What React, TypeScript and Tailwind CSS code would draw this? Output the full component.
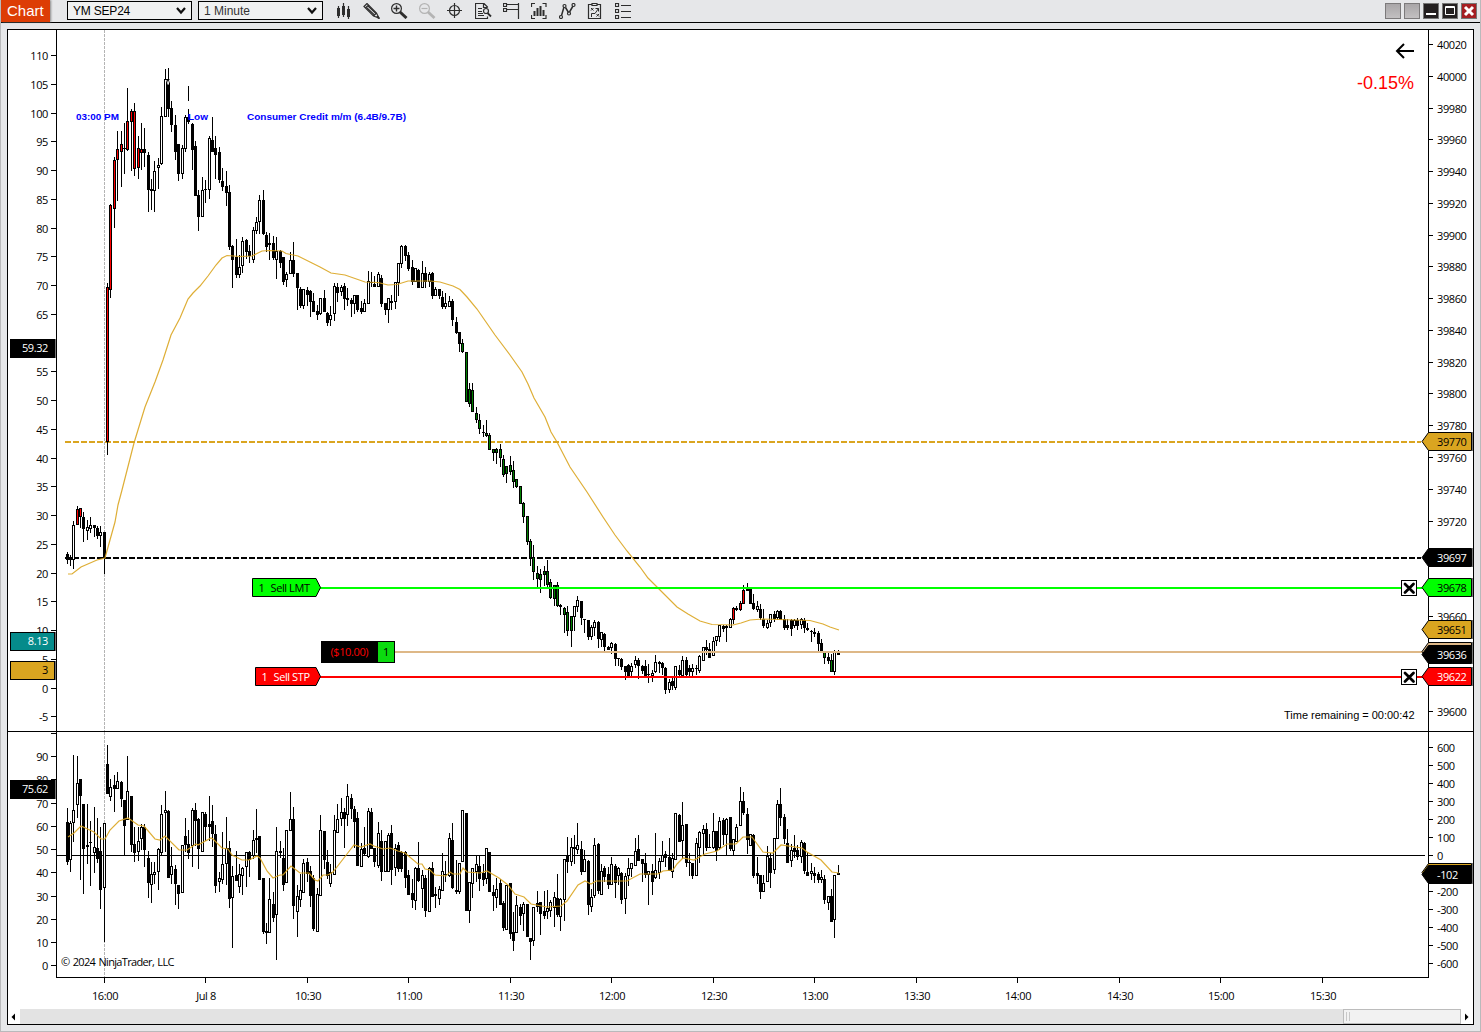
import React from 'react';

const INK = '#000000';
const GOLD = '#daa520';

// each bar: high bodyTop bodyBottom low kind (b = down, h = up, r / g = highlighted)
const PRICE_BARS = `
552 554 559 564 b;555 557 559 566 b;521 525 559 569 h;506 509 524 525 r;508 508 516 528 r;512 517 528 542 b;
520 527 530 540 h;517 525 528 533 h;525 525 527 537 b;526 528 535 539 b;526 532 535 547 h;532 532 557 574 b;
283 287 441 455 r;204 205 289 298 r;157 160 208 228 r;131 149 159 201 r;131 144 151 187 r;123 148 148 174 b;
88 121 149 151 r;109 111 121 171 r;103 111 168 176 r;136 148 167 179 r;123 149 152 170 r;128 149 152 167 b;
152 155 189 212 b;179 189 190 210 b;161 171 190 212 h;158 165 167 189 h;107 116 163 165 h;69 79 116 116 h;
68 79 108 117 b;101 108 124 132 b;115 125 151 160 b;144 144 173 181 b;145 148 173 179 h;115 117 148 152 h;
86 117 121 124 b;123 124 149 170 b;141 146 195 195 b;190 195 216 231 b;177 190 216 216 h;180 189 189 203 b;
136 138 189 199 h;117 140 151 151 b;136 148 154 179 b;147 152 179 183 b;168 181 186 191 b;171 186 192 206 b;
185 192 246 250 b;245 246 259 288 b;239 257 274 278 b;255 267 274 278 h;237 241 265 273 h;239 240 251 259 b;
245 251 255 263 b;227 230 259 263 h;217 222 230 234 h;195 200 221 234 h;190 200 233 235 b;232 235 246 252 b;
233 243 244 260 b;236 243 257 260 b;237 251 259 279 h;250 251 262 268 b;257 257 281 285 b;272 274 279 287 h;
252 260 273 274 h;242 260 273 277 b;273 273 287 310 b;287 289 305 308 b;289 289 305 309 h;287 290 294 306 b;
290 291 301 317 b;293 301 311 312 b;305 311 314 320 b;298 298 313 315 h;290 298 311 312 b;312 313 322 326 b;
306 315 319 326 h;283 286 313 321 h;283 287 292 302 b;285 287 291 296 h;283 286 298 310 b;288 298 299 306 b;
298 300 303 317 b;295 295 303 314 h;295 295 309 312 b;301 308 311 314 b;299 303 311 311 h;271 281 303 303 h;
272 282 282 287 b;276 284 286 287 b;272 274 286 287 h;275 278 303 307 b;303 303 309 315 b;298 298 309 323 h;
295 301 302 310 b;282 282 301 309 h;263 263 282 296 h;245 246 263 268 h;245 246 255 261 b;252 255 268 271 b;
260 267 281 285 b;268 268 281 282 h;269 270 287 288 b;261 273 287 287 h;267 273 281 288 b;272 274 281 287 h;
272 273 295 299 b;287 289 295 296 h;289 289 295 299 b;291 297 306 309 b;293 303 306 309 h;296 301 306 307 h;
299 301 319 326 b;317 322 332 334 b;332 332 343 352 b;339 343 351 353 g;352 352 401 402 g;383 389 403 407 g;
383 390 411 411 g;407 413 419 423 g;414 420 428 434 g;425 432 432 437 b;420 433 435 437 g;433 435 449 449 g;
449 449 452 461 g;448 449 452 464 g;444 449 457 467 g;455 459 474 477 g;466 466 473 483 g;456 465 471 475 g;
461 470 481 488 g;479 479 486 488 g;486 486 503 503 g;502 503 516 523 g;516 516 541 545 g;539 541 557 566 g;
545 557 571 580 g;566 573 578 588 g;569 574 579 593 g;566 571 574 586 g;560 571 584 588 g;579 582 597 599 g;
585 585 598 606 g;582 585 605 607 g;604 605 606 615 b;607 608 614 633 g;606 612 630 636 g;616 616 630 647 g;
606 606 616 631 h;596 600 606 612 h;601 601 617 625 b;619 619 619 633 b;620 620 636 640 b;625 627 636 640 h;
620 622 627 636 h;621 622 638 648 b;632 632 639 647 h;633 634 646 651 b;646 647 649 650 b;642 643 647 654 h;
643 644 658 666 b;658 658 658 666 b;658 659 666 670 b;666 666 671 680 b;664 665 675 676 b;663 666 671 676 h;
656 660 664 668 h;658 660 665 679 b;665 666 670 674 b;660 666 675 676 b;664 674 674 683 b;670 673 675 682 h;
655 662 671 673 h;661 662 663 673 b;662 663 667 675 b;667 668 689 694 b;679 682 689 693 h;678 681 685 690 b;
666 666 687 690 h;665 670 674 676 b;656 660 675 675 h;657 660 674 678 b;665 668 671 678 b;664 668 671 676 h;
665 668 668 675 b;655 656 670 673 h;647 647 660 660 h;640 647 649 655 b;643 649 657 657 b;637 641 655 656 h;
636 636 640 646 h;625 625 636 642 h;625 626 628 632 b;625 626 627 642 b;618 619 627 628 h;607 608 619 624 r;
606 608 609 611 b;601 603 609 611 r;585 590 603 603 r;583 588 590 591 b;587 589 603 604 b;594 603 608 610 b;
601 606 609 612 h;604 609 617 620 b;609 619 625 628 b;620 623 627 629 h;614 614 622 627 h;611 614 618 622 b;
610 611 617 620 h;610 611 619 620 b;615 619 627 630 b;619 625 627 630 b;619 620 628 636 b;619 620 625 628 h;
618 620 625 630 b;618 619 624 629 h;618 620 627 633 b;623 628 629 631 b;630 631 631 642 b;628 632 633 637 b;
631 633 643 651 b;639 643 651 653 b;652 652 657 664 g;653 657 660 664 b;654 660 671 672 g;650 651 671 675 h;
650 653 654 655 b`;

const DELTA_BARS = `
808 822 861 865 b;821 823 859 872 h;755 810 822 842 h;756 783 804 818 h;779 779 795 880 b;804 804 848 894 b;
804 845 846 864 b;821 842 842 886 b;807 847 852 873 h;818 848 858 863 b;827 851 889 909 b;823 823 887 942 h;
745 764 793 793 b;779 787 796 801 h;775 785 788 812 b;772 781 788 789 h;781 782 798 807 b;800 800 825 855 b;
756 791 819 819 h;796 796 844 852 b;827 844 852 862 b;827 841 851 861 h;824 827 838 850 h;824 827 849 867 b;
851 858 882 898 b;862 874 884 903 h;862 872 874 884 h;848 849 871 890 h;805 814 852 855 h;791 810 812 852 h;
810 811 877 877 b;847 866 874 884 h;865 869 883 905 b;885 885 893 909 b;845 845 892 892 h;818 836 844 852 b;
830 844 852 859 b;808 810 845 867 h;803 810 820 846 b;818 819 848 869 b;812 812 851 851 h;812 814 826 841 b;
796 824 826 841 b;805 821 833 847 b;825 834 885 893 b;872 878 881 892 h;832 864 879 884 h;817 848 863 885 h;
841 848 898 908 b;866 876 897 948 h;851 875 880 881 b;864 874 886 893 h;867 868 875 895 h;852 852 866 887 h;
851 852 859 877 b;830 840 855 859 h;809 838 839 853 b;836 836 879 880 b;878 878 931 934 b;923 931 932 944 b;
878 899 932 932 h;892 904 917 922 b;827 851 914 960 h;841 851 852 858 b;848 858 884 891 b;830 830 882 883 h;
792 819 830 830 h;807 819 905 919 b;885 896 911 937 h;874 890 899 907 h;859 863 892 892 h;858 862 873 882 b;
866 871 895 907 b;875 878 928 931 b;888 894 931 931 h;815 830 895 895 h;831 831 859 869 b;850 862 875 879 b;
864 872 883 887 h;815 830 874 875 h;804 819 832 832 h;798 812 818 826 h;808 812 818 848 b;784 796 814 826 h;
794 798 808 819 b;806 809 821 848 b;812 818 865 866 b;843 849 866 866 h;827 848 853 855 b;808 811 856 858 h;
808 812 848 849 b;848 848 861 867 b;822 833 865 868 h;830 841 871 881 b;841 841 871 872 h;833 835 871 872 h;
825 833 869 885 b;844 848 867 876 h;842 845 868 872 b;851 852 868 872 b;851 852 877 888 b;870 875 894 895 b;
879 893 899 908 b;867 868 900 910 h;842 868 880 882 b;870 875 888 908 h;875 878 910 917 b;867 868 911 912 h;
862 868 896 897 b;887 894 895 908 b;886 889 898 905 h;853 871 890 890 h;861 874 874 882 b;833 838 875 877 h;
823 840 887 889 b;860 890 891 894 b;863 863 891 894 h;810 810 861 862 h;813 813 910 911 b;882 882 910 923 h;
868 868 883 898 h;856 864 871 882 h;856 866 878 891 b;864 873 879 886 b;848 848 878 884 h;852 852 891 892 b;
885 892 895 911 b;878 889 897 908 h;879 883 904 905 b;901 903 927 931 b;885 885 929 929 h;883 883 933 939 b;
912 932 940 951 b;896 905 932 932 h;904 907 915 925 b;902 904 913 931 h;904 904 936 937 b;938 938 941 960 b;
907 907 940 946 h;891 903 906 912 b;902 902 913 935 b;891 911 915 919 b;890 908 911 919 h;900 902 910 917 h;
892 897 907 927 h;874 898 914 917 b;898 899 916 931 h;859 859 899 921 h;837 855 861 873 b;838 847 861 866 h;
835 847 848 864 b;823 845 849 854 h;841 849 871 875 b;850 859 871 872 h;860 861 904 915 b;889 897 906 912 h;
838 845 895 898 h;843 844 890 894 b;864 871 894 894 h;866 868 876 882 b;867 874 884 889 b;857 864 884 885 h;
864 866 882 898 b;867 868 875 885 h;872 873 899 904 b;873 876 898 914 h;858 868 875 886 h;863 863 868 877 h;
838 851 865 866 h;835 849 860 861 b;859 859 863 882 b;853 863 874 878 b;871 871 874 905 h;864 871 881 895 b;
833 870 877 879 h;858 861 872 879 h;841 855 861 862 h;851 854 857 867 b;838 857 870 871 b;853 858 871 878 h;
813 813 859 859 h;814 815 841 842 b;802 825 840 859 h;824 824 862 867 b;853 862 862 876 b;863 863 875 879 b;
838 843 875 876 h;831 832 847 863 h;825 829 833 855 h;823 829 847 851 b;834 847 847 848 h;813 831 847 849 h;
831 831 850 861 b;817 821 847 850 h;818 820 834 845 b;818 819 834 855 h;817 817 848 851 b;839 839 850 855 h;
824 827 841 841 h;787 801 825 825 h;792 801 812 815 b;808 814 839 854 b;834 834 845 845 h;834 835 875 878 b;
857 873 875 884 b;875 875 891 899 b;875 883 891 892 h;846 856 881 882 h;853 858 872 888 b;838 838 869 874 h;
800 804 838 838 h;788 804 817 826 b;814 817 838 844 b;829 843 862 863 b;844 850 860 867 h;835 848 851 858 b;
845 850 856 860 b;840 842 856 863 h;842 843 870 874 b;852 872 875 876 b;863 871 873 880 h;867 873 875 883 b;
872 874 879 883 b;870 877 879 883 h;875 879 899 904 b;896 896 902 910 h;889 896 921 921 b;875 875 919 938 h;
865 873 874 875 b`;

const PRICE_MA =
  '68,574 72,574 81,567 97,560 105,558 110,540 115,522 118,505 122,490 134,443 145,407 155,382 163,360 171,335 180,318 188,299 193,293 200,286 208,276 216,265 222,258 227,255.500 240,256.500 252,256 258,253 262,251 270,250.500 282,251 286,253.500 298,256 312,263 320,267 331,273 345,275 365,282 378,282.500 388,285 397,284.500 408,281 430,281 440,282 453,286 460,289.500 467,297 477,309 495,335 510,355 522,372 528,384 534,398 545,417 551,432 557,442 570,467 587,492 603,517 615,535 627,551 640,567 648,578 657,587 677,607 688,614 700,621 712,624.500 733,625 741,623 750,620 763,619 810,620.500 823,624 830,627 839,630';

const DELTA_MA =
  '68,837 74,833 81,826 94,832 101,839 105,839 110,830 119,821 128,818 138,825 144,826 155,839 160,840 165,836 179,850 187,850 196,844 198,845 211,838 213,839 222,848 228,849 232,855 242,860 249,860 257,856 260,858 267,871 273,878 280,875 283,875 291,866 300,873 309,873 315,880 318,881 323,875 328,875 333,872 347,854 354,845 361,847 370,844 374,846 383,849 390,848 398,851 405,853 418,864 422,864 425,869 430,870 435,875 446,876 450,872 453,874 460,874 463,868 467,872 480,873 487,871 499,878 508,885 515,894 524,897 531,904 547,907 561,906 567,901 578,885 585,881 591,884 596,881 627,881 640,874 658,874 663,871 673,870 677,864 683,858 694,860 705,854 717,851 727,844 736,844 743,837 752,837 763,852 773,853 781,845 802,848 807,852 821,860 832,872 839,873';

const TIMES = ['16:00', 'Jul 8', '10:30', '11:00', '11:30', '12:00', '12:30', '13:00', '13:30', '14:00', '14:30', '15:00', '15:30'];

// scale labels that sit fully behind a price tag
const COVERED = [60, 39700, 39680, 39640, 39620, -100];

const FILLS: Record<string, string> = { b: INK, h: '#ffffff', r: '#ff0000', g: '#008000' };

const UI = 'font-["Open_Sans",sans-serif] text-[11px] tracking-[-0.4px]';
const ARIAL = 'font-["Liberation_Sans",sans-serif]';

function Candles({ data }: { data: string }) {
  return (
    <g shapeRendering="crispEdges">
      {data.trim().split(';').map((row, i) => {
        const [hi, top, bottom, lo, kind] = row.trim().split(' ');
        const x = Math.floor(67 + i * 3.3832);
        const h = Number(bottom) - Number(top) + 1;
        return (
          <g key={i}>
            <rect x={x} y={Number(hi)} width={1} height={Math.max(1, Number(lo) - Number(hi))} />
            <rect x={x - 1} y={Number(top)} width={3} height={h} />
            {kind !== 'b' && h > 2 && <rect x={x} y={Number(top) + 1} width={1} height={h - 2} fill={FILLS[kind]} />}
          </g>
        );
      })}
    </g>
  );
}

function SideTag({ y, text, fill, color = '#ffffff' }: { y: number; text: string; fill: string; color?: string }) {
  return (
    <g>
      <rect x={10.5} y={y + 0.5} width={44} height={18} fill={fill} stroke={INK} />
      <rect x={55} y={y} width={1} height={19} fill="#777777" />
      <text x={48} y={y + 13} textAnchor="end" fill={color} className={UI}>{text}</text>
    </g>
  );
}

function PriceTag({ y, text, fill, color = INK }: { y: number; text?: string; fill: string; color?: string }) {
  return (
    <g>
      <path d={`M1422 ${y + 9.5}L1428.500 ${y + 0.5}H1471.500V${y + 18.5}H1428.500Z`} fill={fill} stroke={INK} />
      <rect x={1472} y={y} width={1} height={19} fill="#777777" />
      {text && <text x={1437} y={y + 13.5} fill={color} className={UI}>{text}</text>}
    </g>
  );
}

function CancelBox({ y }: { y: number }) {
  return (
    <g>
      <rect x={1401.5} y={y + 0.5} width={15} height={15} fill="#ffffff" stroke={INK} />
      <path d={`M1405 ${y + 4}l8.500 8.500m0 -8.500l-8.500 8.500`} stroke={INK} strokeWidth={2.8} strokeLinecap="round" />
    </g>
  );
}

function OrderFlag({ x, y, label, fill, color }: { x: number; y: number; label: string; fill: string; color: string }) {
  return (
    <g>
      <path d={`M${x + 0.5} ${y + 0.5}H316L320.500 ${y + 9.5}L316 ${y + 18.5}H${x + 0.5}Z`} fill={fill} stroke={INK} />
      <text x={x + 6.5} y={y + 13.5} fill={color} className={UI}>1</text>
      <text x={x + 18.5} y={y + 13.5} fill={color} className={UI}>{label}</text>
    </g>
  );
}

function Tool({ children, muted }: { children: React.ReactNode; muted?: boolean }) {
  return (
    <svg width="17" height="16" viewBox="0 0 17 16" fill="none" stroke={muted ? '#b4b4b4' : '#2d2d2d'} strokeWidth="1.2">
      {children}
    </svg>
  );
}

function Toolbar() {
  return (
    <div className="ml-[12px] mt-[3px] flex gap-[11px]">
      <Tool>
        <path d="M3.500 3v12M8.500 0v14M13.500 3v13" />
        <path d="M3.500 5v8M8.500 3v9M13.500 6v8" strokeWidth="3" />
      </Tool>
      <Tool>
        <path d="M1 3.500L4 .5L13.500 10L16 15L10.500 13Z M2.500 5L5.500 2M10.500 13l3-3" />
        <path d="M3.500 4.500l8 7.500M5 3l8 7.500" strokeWidth="1.100" />
        <path d="M14 13l2 2.500" strokeWidth="2" />
      </Tool>
      <Tool>
        <circle cx="5.500" cy="5.500" r="4.900" />
        <path d="M2.500 5.500h6M5.500 2.500v6" strokeWidth="1.400" />
        <path d="M9 9l6.500 6" strokeWidth="3" />
      </Tool>
      <Tool muted>
        <circle cx="5.500" cy="5.500" r="4.900" />
        <path d="M2.500 5.500h6" />
        <path d="M9 9l6.500 6" strokeWidth="2.800" />
      </Tool>
      <Tool>
        <circle cx="7.500" cy="7.500" r="5" />
        <path d="M7.500 0v15M0 7.500h15" />
      </Tool>
      <Tool>
        <path d="M12.500 4.500V4L9 .5H.5v15h12v-2M8.500 .5v4h4M3 5.500h4M3 8.500h4M3 10.500h5M3 12.500h6" />
        <circle cx="11" cy="8" r="2.500" />
        <path d="M12.500 10l3.500 3.500" strokeWidth="1.800" />
      </Tool>
      <Tool>
        <path d="M.5 .5h3v3h-3zM.5 5.500h3v3h-3zM4 1.500h12M4 6.500h12M15.500 0v16" />
      </Tool>
      <Tool>
        <path d="M4 .5H.5V4M11.500 .5H15V4M4 15.500H.5V12M11.500 15.500H15V12" />
        <path d="M3.500 8v5M6.500 5v8M9.500 3v10M12.500 7v6" strokeWidth="2" />
      </Tool>
      <Tool>
        <path d="M2.500 12.500L5 4M6.500 4.500l3 5M10.500 9l3.500-6" strokeWidth="1.500" />
        <circle cx="2" cy="14" r="1.500" />
        <circle cx="5.500" cy="3" r="1.500" />
        <circle cx="10" cy="10.500" r="1.500" />
        <circle cx="14.500" cy="2" r="1.500" />
      </Tool>
      <Tool>
        <path d="M5 1.500H1.500v14h12v-14H10M5 .5h5v2H5z" />
        <path d="M4 5l2.500 2.500m0-2.500L4 7.500M9.500 11l2.500 2.500m0-2.500L9.500 13.500M4.500 14v-3.500H8L11.500 5.500M8.500 5.500h3v3" strokeWidth="1" />
      </Tool>
      <Tool>
        <path d="M.5 .5h3v3h-3zM.5 6.500h3v3h-3zM.5 12.500h3v3h-3zM6 2.500h10M6 8.500h10M6 14.500h10" />
      </Tool>
    </div>
  );
}

function Picker({ value, className }: { value: string; className: string }) {
  return (
    <div className={`mt-px flex h-[19px] w-[125px] items-center justify-between border border-black bg-[#f0f1f1] pl-[5px] pr-[5px] font-['Liberation_Sans',sans-serif] text-[12px] leading-[17px] ${className}`}>
      <span className="pt-[2px]">{value}</span>
      <svg width="10" height="8" viewBox="0 0 10 8" fill="none" stroke="#111" strokeWidth="2.200">
        <path d="M1 1L5 5.500L9 1" />
      </svg>
    </div>
  );
}

function TitleBar() {
  return (
    <header className="flex h-[23px] border-b border-black">
      <div className="h-[22px] w-[49px] bg-[#dd3d05] pl-[6px] font-['Liberation_Sans',sans-serif] text-[15px] leading-[22px] text-white shadow-[1px_0_2px_#888]">Chart</div>
      <Picker value="YM SEP24" className="ml-[17px] tracking-[-0.2px] text-black" />
      <Picker value="1 Minute" className="ml-[6px] text-[#333]" />
      <Toolbar />
      <div className="ml-auto mr-[3px] mt-[3px] flex gap-[3px]">
        <div className="size-4 border border-[#7c7a7b] bg-linear-to-b from-[#a9a6a8] to-[#c2c0c1]" />
        <div className="size-4 border border-[#7c7a7b] bg-linear-to-b from-[#a9a6a8] to-[#c2c0c1]" />
        <svg width="16" height="16">
          <rect x=".5" y=".5" width="15" height="15" fill="#231f20" stroke="#777" />
          <rect x="3" y="10" width="10" height="2" fill="#fff" />
        </svg>
        <svg width="16" height="16">
          <rect x=".5" y=".5" width="15" height="15" fill="#231f20" stroke="#777" />
          <path d="M3.500 3.500h9v8h-9zM3 4.500h10" fill="none" stroke="#fff" />
        </svg>
        <svg width="16" height="16">
          <rect x=".5" y=".5" width="15" height="15" fill="#a51e22" stroke="#777" />
          <path d="M4 4l8 8m0-8l-8 8" stroke="#fff" strokeWidth="3" />
        </svg>
      </div>
    </header>
  );
}

function PricePanel() {
  return (
    <section className="flex h-[702px] border-b border-black">
      <svg width="49" height="701" viewBox="8 30 48 701" className="shrink-0 border-r border-black">
        {Array.from({ length: 24 }, (_, i) => {
          const y = Math.floor(55.5 + i * 28.76);
          const value = 110 - i * 5;
          return (
            <g key={i}>
              <rect x={51} y={y} width={5} height={1} />
              {!COVERED.includes(value) && <text x={48} y={y + 5} textAnchor="end" className={UI}>{value}</text>}
            </g>
          );
        })}
        <SideTag y={339} text="59.32" fill={INK} />
        <SideTag y={632} text="8.13" fill="#058b8b" />
        <SideTag y={661} text="3" fill={GOLD} color={INK} />
      </svg>

      <svg width="1371" height="701" viewBox="57 30 1371 701" className="shrink-0">
        <path d="M104.500 30V731" stroke="#b4b4b4" strokeDasharray="3 1" />
        <path d="M65 558H1421" stroke={INK} strokeWidth={2} strokeDasharray="6 2" />
        <path d="M65 442H1421" stroke={GOLD} strokeWidth={2} strokeDasharray="6 2" />
        <Candles data={PRICE_BARS} />
        <rect x={187} y={101} width={3} height={8} fill="#ffffff" />
        <path d="M166.500 80l1.500 4l1.500 -4M170 79l-2 6" stroke="#ffffff" fill="none" strokeWidth={0.8} />
        <polyline points={PRICE_MA} fill="none" stroke={GOLD} strokeWidth={1.2} strokeOpacity={0.9} />

        <g className="font-['Liberation_Sans',sans-serif] text-[9.5px] font-bold" fill="#0000ff">
          <text x={76} y={120} textLength={43} lengthAdjust="spacingAndGlyphs">03:00 PM</text>
          <text x={188} y={120} textLength={20} lengthAdjust="spacingAndGlyphs">Low</text>
          <text x={247} y={120} textLength={159} lengthAdjust="spacingAndGlyphs">Consumer Credit m/m (6.4B/9.7B)</text>
        </g>

        <path d="M320 588H1428" stroke="#00ff00" strokeWidth={2} />
        <path d="M395 652H1428" stroke="#deb887" strokeWidth={2} />
        <path d="M320 677H1428" stroke="#ff0000" strokeWidth={2} />
        <OrderFlag x={252} y={578} label="Sell LMT" fill="#00ff00" color={INK} />
        <OrderFlag x={255} y={667} label="Sell STP" fill="#ff0000" color="#ffffff" />
        <rect x={321} y={641} width={74} height={22} />
        <rect x={378} y={642} width={16} height={20} fill="#0bdb0f" />
        <text x={330.500} y={656} fill="#ff0000" className={UI}>($10.00)</text>
        <text x={383} y={656} className={UI}>1</text>
        <CancelBox y={580} />
        <CancelBox y={669} />

        <path d="M1397 51H1414M1404 44L1397 51L1404 58" fill="none" stroke={INK} strokeWidth={2} />
        <text x={1357} y={89} textLength={57} fill="#ff0000" className={`${ARIAL} text-[18px]`}>-0.15%</text>
        <text x={1284} y={719} textLength={130.500} className={`${ARIAL} text-[11px]`}>Time remaining = 00:00:42</text>
      </svg>

      <svg width="45" height="701" viewBox="1429 30 44 701" className="shrink-0 overflow-visible border-l border-black">
        {Array.from({ length: 22 }, (_, i) => {
          const y = Math.floor(44.5 + i * 31.77);
          const value = 40020 - i * 20;
          return (
            <g key={i}>
              <rect x={1429} y={y} width={4} height={1} />
              {!COVERED.includes(value) && <text x={1437} y={y + 5} className={UI}>{value}</text>}
            </g>
          );
        })}
        <PriceTag y={432} text="39770" fill={GOLD} />
        <PriceTag y={548} text="39697" fill={INK} color="#ffffff" />
        <PriceTag y={578} text="39678" fill="#00ff00" />
        <PriceTag y={620} text="39651" fill={GOLD} />
        <PriceTag y={642} fill="#deb887" />
        <PriceTag y={645} text="39636" fill={INK} color="#ffffff" />
        <PriceTag y={667} text="39622" fill="#ff0000" color="#ffffff" />
      </svg>
    </section>
  );
}

function DeltaPanel() {
  return (
    <section className="flex h-[245px]">
      <svg width="49" height="245" viewBox="8 732 48 245" className="shrink-0 border-r border-black">
        {Array.from({ length: 11 }, (_, i) => {
          const y = Math.floor(733.3 + i * 23.25);
          return (
            <g key={i}>
              <rect x={51} y={y} width={5} height={1} />
              {i > 0 && <text x={48} y={y + 5} textAnchor="end" className={UI}>{100 - i * 10}</text>}
            </g>
          );
        })}
        <SideTag y={780} text="75.62" fill={INK} />
      </svg>

      <svg width="1371" height="245" viewBox="57 732 1371 245" className="shrink-0">
        <path d="M104.500 732V977" stroke="#b4b4b4" strokeDasharray="3 1" />
        <path d="M57 855.500H1425" stroke={INK} />
        <Candles data={DELTA_BARS} />
        <polyline points={DELTA_MA} fill="none" stroke={GOLD} strokeWidth={1.2} strokeOpacity={0.9} />
        <text x={61} y={966} textLength={113} className={`${UI} [word-spacing:1px]`}>© 2024 NinjaTrader, LLC</text>
      </svg>

      <svg width="45" height="245" viewBox="1429 732 44 245" className="shrink-0 overflow-visible border-l border-black">
        {Array.from({ length: 13 }, (_, i) => {
          const y = Math.floor(747.7 + i * 17.97);
          const value = 600 - i * 100;
          return (
            <g key={i}>
              <rect x={1429} y={y} width={4} height={1} />
              {!COVERED.includes(value) && <text x={1437} y={y + 5} className={UI}>{value}</text>}
            </g>
          );
        })}
        <PriceTag y={863} fill={GOLD} />
        <PriceTag y={865} text="-102" fill={INK} color="#ffffff" />
      </svg>
    </section>
  );
}

function TimeAxis() {
  return (
    <svg width="1465" height="32" viewBox="8 977 1465 32" className="block">
      <rect x={56} y={977} width={1373} height={1} />
      {TIMES.map((t, i) => {
        const x = Math.floor(104.4 + i * 101.5);
        return (
          <g key={t}>
            <rect x={x} y={978} width={1} height={5} />
            <text x={x + 1} y={1000} textAnchor="middle" className={UI}>{t}</text>
          </g>
        );
      })}
    </svg>
  );
}

function ScrollBar() {
  return (
    <div className="flex h-[15px] items-center bg-white">
      <svg width="12" height="15"><path d="M7 4.500v7L3.500 8z" /></svg>
      <div className="h-full flex-1 bg-[#e3e3e3]" />
      <div className="flex h-full w-[118px] items-center gap-[2px] border border-[#bcbcbc] bg-[#f2f2f2] pl-[2px]">
        <div className="h-[9px] w-px bg-[#c8c8c8]" />
        <div className="h-[9px] w-px bg-[#c8c8c8]" />
      </div>
      <svg width="12" height="15"><path d="M4 4.500v7L7.500 8z" /></svg>
    </div>
  );
}

export default function App() {
  return (
    <div className="h-[1032px] w-[1481px] overflow-hidden border-x border-b border-[#b9b9bb] bg-[#e6e7e9]">
      <TitleBar />
      <main className="ml-[6px] mt-[6px] h-[996px] w-[1467px] overflow-hidden border border-black bg-white">
        <PricePanel />
        <DeltaPanel />
        <TimeAxis />
        <ScrollBar />
      </main>
    </div>
  );
}
